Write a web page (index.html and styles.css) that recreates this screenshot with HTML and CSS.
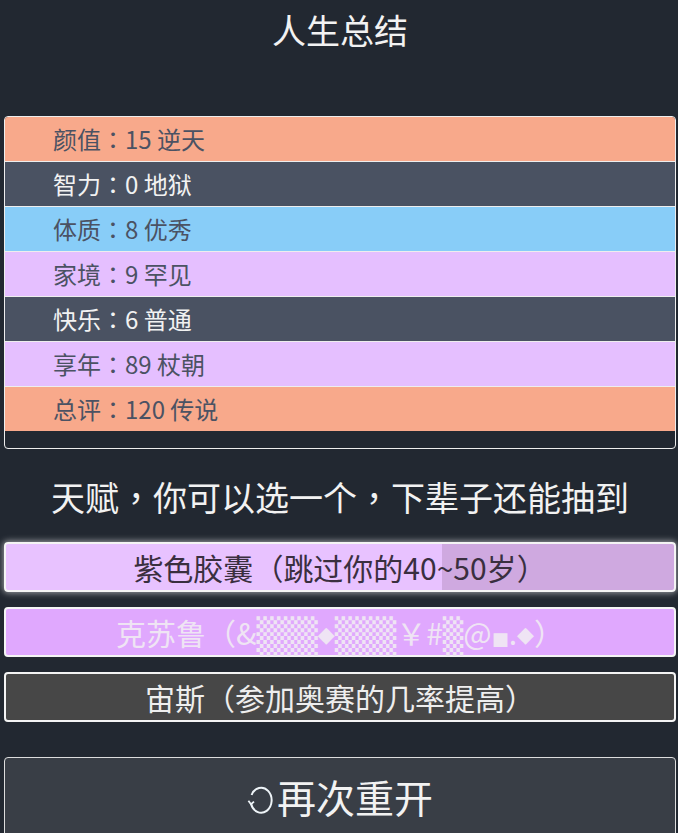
FILE: index.html
```html
<!DOCTYPE html>
<html lang="zh-CN">
<head>
<meta charset="utf-8">
<title>人生总结</title>
<link rel="stylesheet" href="styles.css">
</head>
<body>
<div class="page">
  <h1 class="title">人生总结</h1>
  <ul class="summary">
    <li class="row row-orange">颜值<span class="pc" lang="zh-TW">：</span>15 逆天</li>
    <li class="row row-dark">智力<span class="pc" lang="zh-TW">：</span>0 地狱</li>
    <li class="row row-blue">体质<span class="pc" lang="zh-TW">：</span>8 优秀</li>
    <li class="row row-purple">家境<span class="pc" lang="zh-TW">：</span>9 罕见</li>
    <li class="row row-dark">快乐<span class="pc" lang="zh-TW">：</span>6 普通</li>
    <li class="row row-purple">享年<span class="pc" lang="zh-TW">：</span>89 杖朝</li>
    <li class="row row-orange">总评<span class="pc" lang="zh-TW">：</span>120 传说</li>
  </ul>
  <p class="subtitle">天赋<span class="pc" lang="zh-TW">，</span>你可以选一个<span class="pc" lang="zh-TW">，</span>下辈子还能抽到</p>
  <div class="talents">
    <button class="talent talent-selected">紫色胶囊<span class="pc" lang="zh-TW">（</span>跳过你的40~50岁<span class="pc" lang="zh-TW">）</span></button>
    <button class="talent talent-purple">克苏鲁<span class="pc" lang="zh-TW">（</span>&amp;<span class="shade">▒▒▒</span><span class="gem">◆</span><span class="shade">▒▒▒</span>￥#<span class="shade">▒</span>@<span class="sq">■</span>.<span class="gem">◆</span><span class="pc" lang="zh-TW">）</span></button>
    <button class="talent talent-gray">宙斯<span class="pc" lang="zh-TW">（</span>参加奥赛的几率提高<span class="pc" lang="zh-TW">）</span></button>
  </div>
  <button class="restart"><svg class="restart-icon" width="26" height="30" viewBox="0 0 26 30" aria-hidden="true"><path d="M4.6 11 A10.5 12.5 0 1 1 4 19.5" fill="none" stroke="#eef4f8" stroke-width="2"/><path d="M1.4 16.8 L4 20.2 L7 17.6" fill="none" stroke="#eef4f8" stroke-width="1.8"/></svg>再次重开</button>
</div>
</body>
</html>
```

FILE: styles.css
```css
html, body {
  margin: 0;
  padding: 0;
  background: #222831;
}

body {
  font-family: "Noto Sans CJK SC", "Noto Sans", sans-serif;
  color: #eeeeee;
}

.page {
  display: flex;
  flex-direction: column;
  padding: 0 2px 0 4px;
}

.pc {
  font-family: "Noto Sans CJK TC", "Noto Sans CJK SC", sans-serif;
}

.title {
  margin: 0;
  font-size: 34px;
  font-weight: normal;
  line-height: 60px;
  text-align: center;
  color: #f2f2f2;
}

.summary {
  list-style: none;
  margin: 56px 0 0 0;
  padding: 0 0 17px 0;
  border: 1px solid #eeeeee;
  border-radius: 4px;
  overflow: hidden;
}

.row {
  height: 44px;
  line-height: 44px;
  padding-left: 48px;
  font-size: 24px;
  border-bottom: 1px solid #eeeeee;
  color: #4b5263;
}

.row:last-child {
  border-bottom: none;
}

.row-orange { background: #f8a98b; }
.row-dark { background: #4a5262; color: #f2f2f2; }
.row-blue { background: #88cdf8; }
.row-purple { background: #e5bfff; }

.subtitle {
  margin: 25px 0 0 0;
  font-size: 34px;
  line-height: 46px;
  text-align: center;
  color: #f2f2f2;
}

.talents {
  display: flex;
  flex-direction: column;
  gap: 15px;
  margin-top: 22px;
}

.talent {
  display: block;
  width: 100%;
  height: 50px;
  margin: 0;
  padding: 0;
  border: 2px solid #f4f4f4;
  border-radius: 4px;
  font-family: inherit;
  font-size: 30px;
  line-height: 46px;
  text-align: center;
  white-space: nowrap;
}

.talent-selected {
  background: linear-gradient(to right, #e8c2ff 0, #e8c2ff 65.2%, #cfa9e0 65.2%, #cfa9e0 100%);
  color: #3a2f3f;
  box-shadow: 0 0 6px 1px rgba(255, 255, 255, 0.55);
}

.talent-purple {
  background: #e0a8fe;
  color: #efe4f4;
}

.talent-gray {
  background: #474747;
  color: #eeeeee;
}

.shade {
  font-family: "DejaVu Sans Mono", monospace;
  font-size: 34px;
  line-height: 1;
  vertical-align: -3px;
}

.gem {
  font-family: "DejaVu Sans", sans-serif;
  font-size: 22px;
  vertical-align: 3px;
}

.sq {
  font-family: "DejaVu Sans", sans-serif;
  font-size: 18px;
}

.restart {
  display: flex;
  align-items: center;
  justify-content: center;
  width: 100%;
  height: 100px;
  margin-top: 35px;
  padding: 0 0 22px 0;
  border: 1px solid #dddddd;
  border-radius: 4px;
  background: #393e46;
  color: #f2f2f2;
  font-family: inherit;
  font-size: 39px;
  line-height: 56px;
}

.restart-icon {
  margin-right: 4px;
  margin-top: 6px;
}
```
